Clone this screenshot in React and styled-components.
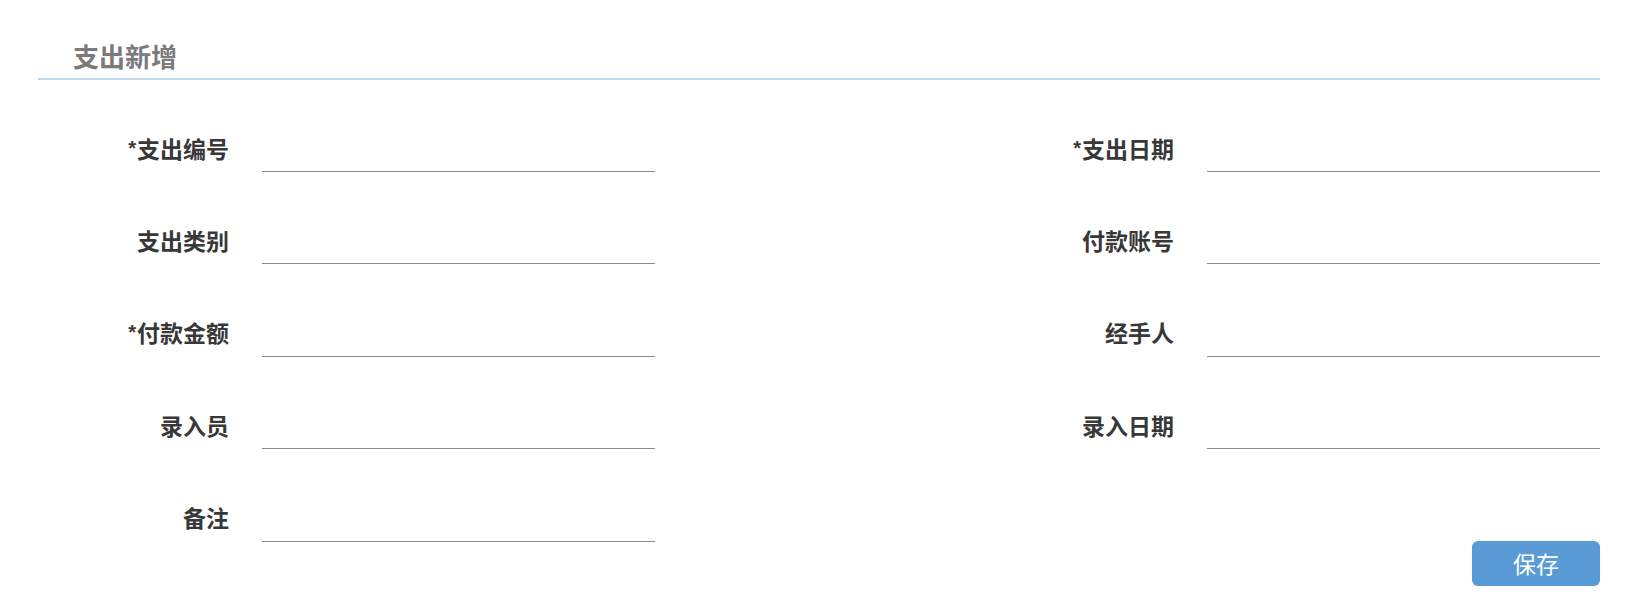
import React from "react";
import styled, { createGlobalStyle } from "styled-components";

const GlobalStyle = createGlobalStyle`
  html, body { margin: 0; padding: 0; background: #fff; }
  body { font-family: "Noto Sans CJK SC", "Noto Sans", sans-serif; }
`;

const Page = styled.div`
  padding: 0 46px 0 38px;
`;

const Header = styled.div`
  padding: 43px 0 9px 35px;
  border-bottom: 2px solid #bdd7ee;
`;

const Title = styled.h2`
  margin: 0;
  font-size: 26px;
  line-height: 26px;
  font-weight: 700;
  color: #7a7a7a;
`;

const Form = styled.div`
  display: flex;
  flex-direction: column;
  gap: 52.4px;
  margin-top: 52px;
`;

const Row = styled.div`
  display: flex;
  justify-content: space-between;
  align-items: center;
`;

const Field = styled.div`
  display: flex;
  align-items: center;
`;

const Label = styled.label`
  width: ${(p) => p.$width}px;
  box-sizing: border-box;
  padding: 0 33px 9px 0;
  text-align: right;
  font-size: 23px;
  line-height: 30px;
  font-weight: 700;
  color: #383838;
  white-space: nowrap;
`;

const Star = styled.span`
  font-family: "Liberation Sans", sans-serif;
  font-weight: 700;
  font-size: 20px;
  vertical-align: 3px;
  margin-right: 1px;
`;

const Input = styled.input`
  width: ${(p) => p.$width}px;
  height: 40px;
  box-sizing: border-box;
  border: none;
  border-bottom: 1px solid #8a8a8a;
  outline: none;
  background: transparent;
  font-size: 18px;
  padding: 0 6px;
`;

const Actions = styled.div`
  display: flex;
  justify-content: flex-end;
  margin-top: -1px;
`;

const Button = styled.button`
  width: 128px;
  height: 45px;
  border: none;
  border-radius: 6px;
  background: #5b9bd5;
  color: #fff;
  font-family: "Noto Sans CJK SC", sans-serif;
  font-size: 23px;
  cursor: pointer;
`;

const rows = [
  [{ label: "支出编号", req: true }, { label: "支出日期", req: true }],
  [{ label: "支出类别" }, { label: "付款账号" }],
  [{ label: "付款金额", req: true }, { label: "经手人" }],
  [{ label: "录入员" }, { label: "录入日期" }],
  [{ label: "备注" }, null],
];

function FieldItem({ item, labelWidth, inputWidth }) {
  return (
    <Field>
      <Label $width={labelWidth}>
        {item.req && <Star>*</Star>}
        {item.label}
      </Label>
      <Input $width={inputWidth} />
    </Field>
  );
}

export default function App() {
  return (
    <>
      <GlobalStyle />
      <Page>
        <Header>
          <Title>支出新增</Title>
        </Header>
        <Form>
          {rows.map(([l, r], i) => (
            <Row key={i}>
              <FieldItem item={l} labelWidth={224} inputWidth={393} />
              {r && <FieldItem item={r} labelWidth={200} inputWidth={393} />}
            </Row>
          ))}
        </Form>
        <Actions>
          <Button>保存</Button>
        </Actions>
      </Page>
    </>
  );
}
